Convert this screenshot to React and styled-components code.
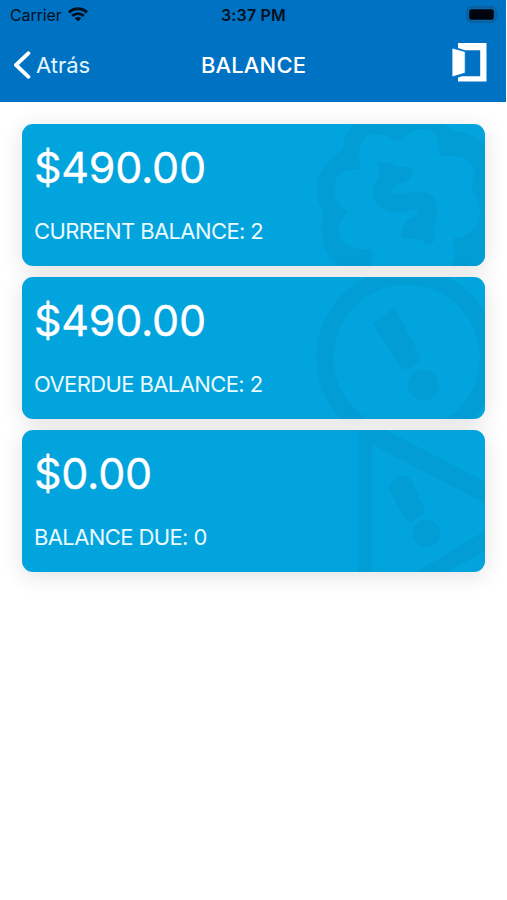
import React from 'react';
import styled, { createGlobalStyle } from 'styled-components';

const GlobalStyle = createGlobalStyle`
  body {
    margin: 0;
    background-color: #FFFFFF;
    font-family: Inter, "Liberation Sans", sans-serif;
  }
`;

const Screen = styled.div`
  width: 507px;
  height: 900px;
  overflow: hidden;
  background-color: #FFFFFF;
`;

const Header = styled.header`
  width: 506px;
  height: 102px;
  background-color: #0072C3;
`;

const StatusBar = styled.div`
  display: grid;
  grid-template-columns: 1fr auto 1fr;
  align-items: center;
  height: 29px;
  padding: 0 7px 0 10px;
  color: #031020;
`;

const Carrier = styled.div`
  display: flex;
  align-items: center;
  gap: 6px;
  font-size: 16px;
  letter-spacing: -0.1px;
`;

const Clock = styled.div`
  margin-right: 2px;
  font-size: 16px;
  font-weight: 600;
  letter-spacing: 0.2px;
`;

const Battery = styled.svg`
  justify-self: end;
  display: block;
`;

const NavBar = styled.div`
  display: grid;
  grid-template-columns: 1fr auto 1fr;
  align-items: center;
  height: 72px;
  padding: 0 19px 0 13px;
  color: #FFFFFF;
`;

const BackButton = styled.div`
  display: flex;
  align-items: center;
  gap: 5px;
  font-size: 22px;
  color: #E4F6FF;
`;

const Title = styled.div`
  padding-left: 7px;
  font-size: 22px;
  font-weight: 500;
  letter-spacing: 0.15px;
`;

const ExitIcon = styled.svg`
  justify-self: end;
  display: block;
  margin-bottom: 6px;
`;

const CardList = styled.main`
  display: flex;
  flex-direction: column;
  gap: 11px;
  padding: 22px 22px 0 22px;
`;

const Card = styled.section`
  position: relative;
  box-sizing: border-box;
  height: 142px;
  padding: 16px 12px 0;
  border-radius: 11px;
  overflow: hidden;
  background-color: #02A4DD;
  color: #FFFFFF;
  box-shadow: 0 4px 22px rgba(0, 0, 0, 0.12);
`;

const Amount = styled.div`
  font-size: 43px;
  line-height: 54px;
  letter-spacing: -0.25px;
  -webkit-text-stroke: 0.3px #FFFFFF;
`;

const Label = styled.div`
  margin-top: 23px;
  font-size: 22px;
  line-height: 28px;
  letter-spacing: -0.6px;
  color: #EAFAFF;
`;

// oversized icon bleeding off the card's right edge
const Watermark = styled.svg`
  position: absolute;
  top: 0;
  right: 0;
  width: 185px;
  height: 142px;
  color: #019DD4;
`;

const BadgeMark = () => (
  <Watermark viewBox="0 42 555 426" fill="currentColor">
    <path
      fillRule="evenodd"
      d="M165 42Q128 72 130 118Q86 150 80 166Q48 188 50 240Q50 284 74 306Q62 330 66 375Q70 435 120 468L555 468V107Q542 90 528 86Q500 64 462 64Q445 50 428 42Z
         M181 178C176 150 170 112 190 88C210 66 252 64 280 90Q290 95 301 90C320 66 360 50 390 62C415 70 417 100 418 138C450 140 490 134 511 158C530 178 524 212 512 240C530 260 542 285 540 310C538 350 510 382 460 385C462 405 468 440 456 470H217V418C170 420 135 410 120 385C108 355 124 322 146 304C110 290 100 262 102 230C106 190 130 174 181 178Z"
    />
    <path d="M235 160Q250 152 272 160Q290 174 310 172Q336 165 339 180Q334 206 318 216Q280 224 275 242Q284 254 310 250Q365 236 394 256Q416 278 412 318L399 360L405 386Q396 406 382 402L351 384Q320 392 305 380Q300 366 314 344Q322 328 342 322Q358 314 355 302Q350 294 330 300Q288 318 250 298Q216 280 219 240Q223 220 239 200Z" />
  </Watermark>
);

const CircleAlertMark = () => (
  <Watermark viewBox="0 36 555 426" fill="currentColor">
    <circle cx="320" cy="278" r="245" fill="none" stroke="currentColor" strokeWidth="52" />
    <path d="M218 176L276 133Q286 131 300 155L361 277Q362 284 350 294L322 312Q310 316 302 304Z" />
    <circle cx="370" cy="360" r="46" />
  </Watermark>
);

const TriangleAlertMark = () => (
  <Watermark viewBox="0 30 555 426" fill="currentColor">
    <path d="M175 30H257L555 185V249L217 74V456H175Z" />
    <path d="M555 332V393L441 456H350Z" />
    <path d="M265 204Q284 170 312 168Q334 172 341 192L374 270Q374 278 364 286L340 303Q330 306 318 298L303 280Z" />
    <circle cx="379" cy="340" r="41" />
  </Watermark>
);

const balances = [
  { amount: '$490.00', label: 'CURRENT BALANCE: 2', Mark: BadgeMark },
  { amount: '$490.00', label: 'OVERDUE BALANCE: 2', Mark: CircleAlertMark },
  { amount: '$0.00', label: 'BALANCE DUE: 0', Mark: TriangleAlertMark },
];

function App() {
  return (
    <Screen>
      <GlobalStyle />
      <Header>
        <StatusBar>
          <Carrier>
            Carrier
            <svg width="20" height="15" viewBox="0 0 20 15" fill="none" stroke="currentColor" strokeWidth="2.9">
              <path d="M1 5.4C6 .6 14 .6 19 5.4" />
              <path d="M4.2 8.9C7.5 5.8 12.5 5.8 15.8 8.9" />
              <path d="M10 14.5L6.8 11.2C8.5 9.6 11.5 9.6 13.2 11.2Z" fill="currentColor" stroke="none" />
            </svg>
          </Carrier>
          <Clock>3:37 PM</Clock>
          <Battery width="33" height="17" viewBox="0 0 33 17">
            <rect x="1" y="1" width="29" height="15" rx="4.5" fill="#0868AC" stroke="#0B5C98" strokeWidth="1.4" />
            <rect x="3.2" y="3.3" width="24.6" height="10.4" rx="2.5" fill="#000510" />
            <path d="M31.3 6.2Q33 8.5 31.3 10.8Z" fill="#0B5C98" />
          </Battery>
        </StatusBar>
        <NavBar>
          <BackButton>
            <svg width="18" height="28" viewBox="0 0 18 28" fill="none" stroke="#FFFFFF" strokeWidth="3.8" strokeLinecap="round" strokeLinejoin="round">
              <path d="M15.5 2.2L3 14L15.5 25.8" />
            </svg>
            Atrás
          </BackButton>
          <Title>BALANCE</Title>
          <ExitIcon width="35" height="39" viewBox="0 0 35 39" fill="#FFFFFF">
            <path d="M6 0H34.5V38.5H6V34.5L10 33.2H28.2V7.2H13L6 5Z" />
            <path d="M0 5L13.2 8.6V30L0 34Z" stroke="#0072C3" strokeWidth="0.8" />
          </ExitIcon>
        </NavBar>
      </Header>
      <CardList>
        {balances.map(({ amount, label, Mark }) => (
          <Card key={label}>
            <Mark />
            <Amount>{amount}</Amount>
            <Label>{label}</Label>
          </Card>
        ))}
      </CardList>
    </Screen>
  );
}

export default App;
